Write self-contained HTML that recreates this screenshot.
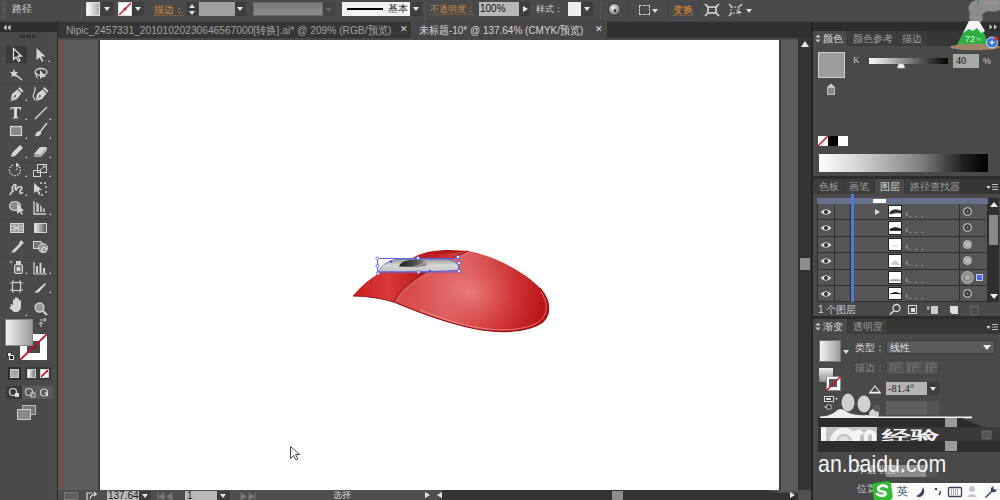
<!DOCTYPE html>
<html><head><meta charset="utf-8">
<style>
*{margin:0;padding:0;box-sizing:border-box}
html,body{width:1000px;height:500px;overflow:hidden;background:#535353;font-family:"Liberation Sans",sans-serif;position:relative}
.a{position:absolute}
.txt{color:#c8c8c8;font-size:11px;white-space:nowrap;line-height:1}
.dd{background:#3e3e3e}
.dd::after{content:"";position:absolute;left:50%;top:50%;margin-left:-3.5px;margin-top:-2px;border-left:3.5px solid transparent;border-right:3.5px solid transparent;border-top:4px solid #e6e6e6}
.tri-dn{position:absolute;width:0;height:0;border-left:3px solid transparent;border-right:3px solid transparent;border-top:4px solid #ddd}
.tri-up{position:absolute;width:0;height:0;border-left:3px solid transparent;border-right:3px solid transparent;border-bottom:4px solid #ddd}
.tri-r{position:absolute;width:0;height:0;border-top:3px solid transparent;border-bottom:3px solid transparent;border-left:5px solid #e6e6e6}
.tri-l{position:absolute;width:0;height:0;border-top:3px solid transparent;border-bottom:3px solid transparent;border-right:5px solid #e6e6e6}
</style></head><body>
<!-- BASE BLOCKS -->
<div class="a" style="left:0;top:22px;width:57px;height:478px;background:#4a4a4a"></div>
<div class="a" style="left:57px;top:22px;width:1px;height:478px;background:#2a2a2a"></div>
<div class="a" style="left:58px;top:22px;width:755px;height:16px;background:#303030"></div>
<div class="a" style="left:58px;top:38px;width:740px;height:452px;background:#5c5c5c"></div>
<div class="a" style="left:58px;top:38px;width:740px;height:2px;background:#4a4a4a"></div>
<div class="a" style="left:58px;top:40px;width:3px;height:450px;background:#625858"></div>
<div class="a" style="left:61px;top:40px;width:3px;height:450px;background:#7a4c4c"></div>
<div class="a" style="left:98px;top:40px;width:2px;height:450px;background:#3c3c3c"></div>
<div class="a" style="left:100px;top:40px;width:679px;height:450px;background:#fff"></div>
<div class="a" style="left:779px;top:40px;width:2px;height:450px;background:#3c3c3c"></div>
<div class="a" style="left:798px;top:38px;width:13px;height:462px;background:#343434"></div>
<div class="a" style="left:811px;top:22px;width:2px;height:478px;background:#262626"></div>
<div class="a" style="left:813px;top:22px;width:187px;height:478px;background:#494949"></div>
<!-- TOP BAR -->
<div class="a" style="left:0;top:0;width:1000px;height:22px;background:#4a4a4a;border-bottom:1px solid #424242"></div>
<div class="a" style="left:2px;top:2px;width:3px;height:17px;border-left:1px dotted #6a6a6a;border-right:1px dotted #6a6a6a"></div>
<div class="a txt" style="left:12px;top:4px;font-size:10px;color:#d6d6d6">路径</div>
<div class="a" style="left:81px;top:2px;height:17px;border-left:1px dotted #666"></div>
<!-- fill swatch -->
<div class="a" style="left:86px;top:2px;width:14px;height:14px;background:linear-gradient(90deg,#fff,#aaa);border:1px solid #ddd"></div>
<div class="a dd" style="left:101px;top:2px;width:13px;height:14px"></div>
<!-- stroke swatch -->
<div class="a" style="left:118px;top:2px;width:14px;height:14px;background:#fff;border:1px solid #ddd;overflow:hidden">
 <svg width="14" height="14" style="position:absolute;left:-1px;top:-1px"><line x1="1" y1="13" x2="13" y2="1" stroke="#d01f2f" stroke-width="1.5"/><circle cx="7" cy="7" r="1.5" fill="#d01f2f"/></svg></div>
<div class="a dd" style="left:132px;top:2px;width:12px;height:14px"></div>
<div class="a txt" style="left:154px;top:5px;color:#d08a3a;font-size:9.5px;border-bottom:1px dotted #a87030;padding-bottom:0">描边：</div>
<div class="a" style="left:186px;top:2px;width:12px;height:14px;background:#3e3e3e"><div class="tri-up" style="left:3px;top:2px"></div><div class="tri-dn" style="left:3px;top:9px"></div></div>
<div class="a" style="left:199px;top:2px;width:36px;height:14px;background:#9f9f9f"></div>
<div class="a dd" style="left:235px;top:2px;width:11px;height:14px"></div>
<div class="a" style="left:253px;top:2px;width:70px;height:14px;background:linear-gradient(#7a7a7a,#8c8c8c);border:1px solid #6a6a6a"></div>
<div class="a" style="left:323px;top:2px;width:12px;height:14px;background:#444"><div class="tri-dn" style="left:3px;top:6px;border-top-color:#666"></div></div>
<!-- brush -->
<div class="a" style="left:342px;top:2px;width:68px;height:14px;background:#f2f2f2"></div>
<div class="a" style="left:347px;top:8px;width:36px;height:2px;background:#000"></div>
<div class="a txt" style="left:388px;top:4px;color:#222;font-size:10px">基本</div>
<div class="a dd" style="left:410px;top:2px;width:12px;height:14px"></div>
<div class="a" style="left:425px;top:2px;height:17px;border-left:1px dotted #666"></div>
<div class="a txt" style="left:430px;top:5px;color:#c08a40;font-size:9px;border-bottom:1px dotted #a06a2a">不透明度：</div>
<div class="a" style="left:479px;top:2px;width:40px;height:14px;background:#b8b8b8"></div>
<div class="a txt" style="left:480px;top:4px;color:#111;font-size:10px">100%</div>
<div class="a" style="left:519px;top:2px;width:11px;height:14px;background:#3e3e3e"><div class="tri-r" style="left:4px;top:4px"></div></div>
<div class="a txt" style="left:536px;top:5px;color:#d0d0d0;font-size:9px">样式：</div>
<div class="a" style="left:568px;top:2px;width:13px;height:14px;background:#eee"></div>
<div class="a dd" style="left:581px;top:2px;width:12px;height:14px"></div>
<div class="a" style="left:600px;top:2px;height:17px;border-left:1px dotted #666"></div>
<div class="a" style="left:608px;top:3px;width:13px;height:13px;border-radius:50%;background:radial-gradient(circle at 40% 35%,#f4f4f4 0,#b8b8b8 3px,#7a7a7a 6.5px);border:1px solid #333"><div class="a" style="left:4.5px;top:5px;width:2.5px;height:3px;border-radius:50%;background:#222"></div></div>
<div class="a" style="left:628px;top:2px;height:17px;border-left:1px solid #444"></div>
<div class="a" style="left:639px;top:5px;width:11px;height:10px;border:1px dashed #ccc"></div>
<div class="a tri-dn" style="left:652px;top:9px"></div>
<div class="a" style="left:667px;top:2px;height:17px;border-left:1px solid #444"></div>
<div class="a" style="left:671px;top:2px;width:27px;height:16px;background:#46484e"></div>
<div class="a txt" style="left:673px;top:5px;color:#e0902a;font-size:10px;border-bottom:1px dotted #a87030">变换</div>
<div class="a" style="left:700px;top:2px;height:17px;border-left:1px solid #444"></div>
<svg class="a" style="left:704px;top:3px" width="16" height="14"><rect x="4" y="4" width="8" height="6" fill="none" stroke="#ddd" stroke-width="1.5"/><path d="M1 1l3 3M15 1l-3 3M1 13l3-3M15 13l-3-3" stroke="#ddd" stroke-width="1.5"/></svg>
<svg class="a" style="left:728px;top:3px" width="16" height="14"><rect x="3" y="4" width="8" height="6" fill="none" stroke="#ccc" stroke-width="1" stroke-dasharray="2 1"/><path d="M1 1l3 3M14 1l-3 3M1 13l3-3" stroke="#ccc" stroke-width="1.5"/><path d="M8 6l6 4-3 0 1 3z" fill="#ddd"/></svg>
<div class="a tri-dn" style="left:746px;top:9px"></div>
<!-- DOC TABS -->
<div class="a" style="left:58px;top:22px;width:353px;height:16px;background:#363636"></div>
<div class="a txt" style="left:66px;top:25px;font-size:11px;color:#a0a0a0;transform:scaleX(0.928);transform-origin:0 0">Nipic_2457331_20101020230646567000[转换].ai* @ 209% (RGB/预览)</div>
<div class="a txt" style="left:400px;top:25px;font-size:9px;color:#ddd">✕</div>
<div class="a" style="left:411px;top:22px;width:196px;height:16px;background:#474747"></div>
<div class="a txt" style="left:419px;top:25px;font-size:11px;color:#d4d4d4;transform:scaleX(0.907);transform-origin:0 0">未标题-10* @ 137.64% (CMYK/预览)</div>
<div class="a txt" style="left:595px;top:25px;font-size:9px;color:#e0e0e0">✕</div>
<!-- TOOLBOX -->
<div class="a" style="left:0;top:22px;width:57px;height:10px;background:#2e2e2e"></div>
<svg class="a" style="left:3px;top:24px" width="8" height="7"><path d="M3.5 0.5L0.5 3.5L3.5 6.5ZM7.5 0.5L4.5 3.5L7.5 6.5Z" fill="#cfcfcf"/></svg>
<div class="a" style="left:20px;top:35px;width:16px;height:3px;background:repeating-linear-gradient(90deg,#2c2c2c 0 2px,#4a4a4a 2px 3px)"></div>
<div class="a" style="left:53px;top:32px;width:3px;height:468px;background:#4e4b4b"></div>
<div class="a" style="left:6px;top:46px;width:21px;height:17px;background:#393939"></div>
<svg class="a" style="left:0;top:40px" width="57" height="290">
<g fill="#d4d4d4" stroke="none">
 <!-- selection outlined arrow -->
 <path d="M13.5 8.5 L13.5 19.5 L16 17 L18.5 21.5 L20 20.5 L17.8 16.2 L21.5 16.2 Z" fill="#2a2a2a" stroke="#e4e4e4" stroke-width="1.2"/>
 <!-- direct selection -->
 <path d="M36.5 8 L36.5 20 L39.5 17.5 L42 22 L43.5 21 L41 16.5 L45.5 16.5 Z"/>
 <path d="M48 22 l2 -2 v2z"/>
 <!-- magic wand -->
 <path d="M14 29 l1.2 3 3 0.3 -2.3 2 0.8 3 -2.7 -1.6 -2.7 1.6 0.8 -3 -2.3 -2 3 -0.3z"/>
 <path d="M16 35 L22 40" stroke="#d4d4d4" stroke-width="1.6"/>
 <!-- lasso -->
 <ellipse cx="41" cy="32" rx="6" ry="3.5" fill="none" stroke="#d4d4d4" stroke-width="1.4"/>
 <path d="M37 33 q-2 4 1 5" fill="none" stroke="#d4d4d4" stroke-width="1.2"/>
 <path d="M40 30 L40 39 L42.5 37 L46 37 Z"/>
</g>
<line x1="4" y1="43.5" x2="50" y2="43.5" stroke="#434343"/>
<g fill="#d4d4d4">
 <!-- pen -->
 <path d="M10.5 61.5 L12 54 L17.5 49.5 L21.5 53.5 L17 59 Z"/><path d="M18 48.5 l1.5 -1.5 4 4 -1.5 1.5z"/><circle cx="15" cy="56" r="1" fill="#4a4a4a"/><path d="M10.5 61.5 L15 56" stroke="#4a4a4a" stroke-width="0.6"/>
 <path d="M25 61 l2 -2 v2z"/>
 <path d="M35.5 61.5 L37 54 L42.5 49.5 L46.5 53.5 L42 59 Z"/><path d="M43 48.5 l1.5 -1.5 4 4 -1.5 1.5z"/><circle cx="40" cy="56" r="1" fill="#4a4a4a"/><path d="M35.5 61.5 L40 56" stroke="#4a4a4a" stroke-width="0.6"/>
 <path d="M35 60 q-3 -4 -1 -7 q2 -3 1 -6" fill="none" stroke="#d4d4d4" stroke-width="1.2"/>
 <!-- type -->
 <path d="M11 67 h10 v3 h-0.8 l-0.8 -1.6 h-2.4 v8.6 l1.3 0.8 v0.7 h-5.6 v-0.7 l1.3 -0.8 v-8.6 h-2.4 l-0.8 1.6 h-0.8z"/>
 <path d="M25 80 l2 -2 v2z"/>
 <!-- line -->
 <path d="M35 79 L47 67" stroke="#d4d4d4" stroke-width="1.5"/>
 <path d="M49 80 l2 -2 v2z"/>
 <!-- rect -->
 <rect x="10.5" y="86.5" width="11" height="9" fill="#8a8a8a" stroke="#d4d4d4" stroke-width="1.2"/>
 <path d="M25 99 l2 -2 v2z"/>
 <!-- brush -->
 <path d="M47 83 L40 92" stroke="#d4d4d4" stroke-width="1.4"/>
 <path d="M35 96 q1 -5 5 -5 q2 1 1 3 q-2 3 -6 2z"/>
 <path d="M49 99 l2 -2 v2z"/>
 <!-- pencil -->
 <path d="M11 117 l1 -4 8 -8 3 3 -8 8z"/>
 <path d="M25 118 l2 -2 v2z"/>
 <!-- eraser -->
 <path d="M34 114 l6 -7 h7 l-6 7z" /><path d="M34 114 v3 h7 v-3z" fill="#a0a0a0"/><path d="M41 117 l6 -7 v-3 l-6 7z" fill="#bcbcbc"/>
 <path d="M49 118 l2 -2 v2z"/>
</g>
<line x1="4" y1="122.5" x2="50" y2="122.5" stroke="#434343"/>
<g fill="#d4d4d4">
 <!-- rotate -->
 <path d="M13 125 a5.5 5.5 0 1 0 6 1.5" fill="none" stroke="#d4d4d4" stroke-width="1.3" stroke-dasharray="1.6 1.2"/>
 <path d="M16 122.5 l3.5 2.5 -3.5 2.5z"/><path d="M16 130.5 l2 -3" stroke="#d4d4d4"/>
 <path d="M25 137 l2 -2 v2z"/>
 <!-- scale -->
 <rect x="33.5" y="130.5" width="7" height="6" fill="none" stroke="#d4d4d4" stroke-width="1"/>
 <rect x="37.5" y="124.5" width="9" height="8" fill="none" stroke="#d4d4d4" stroke-width="1"/>
 <path d="M40 130 l5 -4 M43 126 h2 v2" stroke="#d4d4d4" fill="none"/>
 <path d="M49 137 l2 -2 v2z"/>
 <!-- puppet warp -->
 <path d="M10 155 q1 -3 3 -4 q-2 -3 1 -6 q2 -1 2 1 q-2 2 0 4 q2 -4 5 -3 q2 1 0 3 q-2 1 -1 3 q2 1 3 -1" fill="none" stroke="#d4d4d4" stroke-width="1.6"/>
 <path d="M25 156 l2 -2 v2z"/>
 <!-- free transform -->
 <path d="M34 143 L34 153 L37 151 L39 155 L40.5 154 L38.5 150 L42 150 Z"/>
 <path d="M40 143 h2 M44 143 h2 M46 146 v2 M46 151 v2 M41 155 h2" stroke="#d4d4d4" stroke-width="1.3"/>
 <!-- shape builder -->
 <ellipse cx="15" cy="166" rx="5.5" ry="4.5" fill="#8a8a8a" stroke="#d4d4d4" stroke-width="1.2"/>
 <path d="M17 163 L17 174 L19.5 172 L22 175 L23 174 L21 171 L24 171 Z"/>
 <!-- perspective -->
 <path d="M34 161 v13 h12" fill="none" stroke="#d4d4d4" stroke-width="1.3"/>
 <path d="M36 162 v10 h3 v-8z M40 165 v7 h2 v-5z M43 168 v4 h2 v-3z" fill="#b4b4b4"/>
 <path d="M49 175 l2 -2 v2z"/>
</g>
<line x1="4" y1="179.5" x2="50" y2="179.5" stroke="#434343"/>
<g fill="#d4d4d4">
 <!-- mesh -->
 <rect x="10.5" y="183.5" width="13" height="9" fill="#9a9a9a" stroke="#d4d4d4"/>
 <path d="M11 186 q6 3 12 0 M11 190 q6 -3 12 0 M14 184 q3 4 0 8 M19 184 q-3 4 0 8" fill="none" stroke="#e0e0e0" stroke-width="0.8"/>
 <!-- gradient -->
 <defs><linearGradient id="tg" x1="0" x2="1"><stop offset="0" stop-color="#eee"/><stop offset="1" stop-color="#555"/></linearGradient></defs>
 <rect x="34.5" y="183.5" width="12" height="9" fill="url(#tg)" stroke="#d4d4d4"/>
 <!-- eyedropper -->
 <path d="M12 211 l8 -8 2 2 -8 8z"/><path d="M19 203 l2 -3 3 3 -3 2z"/><path d="M11 213 l1 -2 1 1z"/>
 <!-- blend -->
 <rect x="33.5" y="201.5" width="8" height="7" fill="#777" stroke="#d4d4d4"/>
 <circle cx="43" cy="208" r="4.5" fill="#999" stroke="#d4d4d4"/>
 <circle cx="44" cy="210" r="2.5" fill="none" stroke="#e0e0e0"/>
</g>
<line x1="4" y1="217.5" x2="50" y2="217.5" stroke="#434343"/>
<g fill="#d4d4d4">
 <!-- symbol sprayer -->
 <rect x="14.5" y="224.5" width="8" height="9" rx="1.5" fill="#777" stroke="#d4d4d4"/>
 <rect x="16" y="221" width="5" height="3"/>
 <circle cx="18.5" cy="229" r="2" fill="#ddd"/>
 <circle cx="11" cy="222" r="1.3" fill="#999"/>
 <path d="M25 234 l2 -2 v2z"/>
 <!-- column graph -->
 <path d="M34 222 v12 h13" fill="none" stroke="#d4d4d4" stroke-width="1.2"/>
 <path d="M36 226h2v7h-2z M39.5 223h2v10h-2z M43 228h2v5h-2z"/>
 <path d="M49 234 l2 -2 v2z"/>
 <!-- artboard -->
 <rect x="12.5" y="242.5" width="8" height="8" fill="none" stroke="#d4d4d4" stroke-width="1.2"/>
 <path d="M10 243h2M10 250h2M21 243h2M21 250h2M13 240v2M20 240v2M13 251v2M20 251v2" stroke="#d4d4d4"/>
 <!-- slice -->
 <path d="M35 252 l10 -9 1 1 -7 8 -3 1z"/>
 <path d="M49 253 l2 -2 v2z"/>
 <g transform="translate(0,5)"><!-- hand -->
 <path d="M11 262 q-1 -4 1 -3 l1 2 v-6 q1 -2 2 0 v4 v-6 q1 -2 2 0 v6 v-5 q1 -2 2 0 v5 v-3 q1 -2 2 0 v5 q0 5 -4 6 h-3 q-2 -1 -5 -5z"/>
 <path d="M25 271 l2 -2 v2z"/>
 <!-- zoom -->
 <circle cx="39.5" cy="262.5" r="4.5" fill="#999" stroke="#d4d4d4" stroke-width="1.3"/>
 <path d="M43 266 l4 4" stroke="#d4d4d4" stroke-width="2.2"/></g>
</g>
</svg>
<!-- fill/stroke -->
<div class="a" style="left:20px;top:334px;width:27px;height:26px;background:#fff"></div>
<div class="a" style="left:27px;top:341px;width:13px;height:12px;background:#4a4a4a"></div>
<svg class="a" style="left:20px;top:334px" width="27" height="26"><line x1="0" y1="26" x2="27" y2="0" stroke="#c8102e" stroke-width="1.8"/><rect x="11" y="11" width="5" height="4" fill="#8a2525"/></svg>
<div class="a" style="left:5px;top:319px;width:28px;height:27px;background:linear-gradient(90deg,#f4f4f4,#9a9a9a);border:1px solid #888"></div>
<svg class="a" style="left:38px;top:318px" width="12" height="11"><path d="M2 2 h6 l-2 -2 M8 2 l-2 2 M3 9 v-5 l-2 2 M3 4 l2 2" fill="none" stroke="#ccc" stroke-width="1"/></svg>
<div class="a" style="left:7px;top:352px;width:5px;height:5px;background:#eee;border:1px solid #333"></div>
<div class="a" style="left:9px;top:355px;width:5px;height:5px;background:#222;border:1px solid #ddd"></div>
<!-- color mode buttons -->
<div class="a" style="left:8px;top:367px;width:13px;height:13px;background:#2e2e2e"><div class="a" style="left:2px;top:2px;width:9px;height:9px;background:#a8a8a8;border:1px solid #ccc"></div></div>
<div class="a" style="left:25px;top:367px;width:13px;height:13px;background:#3a3a3a"><div class="a" style="left:2px;top:2px;width:9px;height:9px;background:linear-gradient(90deg,#fff,#777);border:1px solid #ccc"></div></div>
<div class="a" style="left:38px;top:367px;width:13px;height:13px;background:#3a3a3a"><div class="a" style="left:2px;top:2px;width:9px;height:9px;background:#fff;border:1px solid #ccc;overflow:hidden"><svg width="9" height="9" style="position:absolute;left:-1px;top:-1px"><line x1="0" y1="9" x2="9" y2="0" stroke="#d0102e" stroke-width="1.8"/></svg></div></div>
<!-- draw modes -->
<div class="a" style="left:6px;top:386px;width:47px;height:13px;background:#5a5a5a"></div>
<div class="a" style="left:6px;top:386px;width:16px;height:13px;background:#3a3a3a"></div>
<svg class="a" style="left:6px;top:386px" width="47" height="13">
 <circle cx="7" cy="6" r="3.5" fill="none" stroke="#ddd" stroke-width="1.2"/><rect x="9" y="7" width="4" height="4" fill="#ddd"/>
 <circle cx="23" cy="6" r="3.5" fill="none" stroke="#ccc" stroke-width="1.2"/><rect x="25" y="7" width="4" height="4" fill="none" stroke="#ccc"/>
 <circle cx="38" cy="6.5" r="3.5" fill="none" stroke="#ccc" stroke-width="1.2"/><path d="M38 6.5 h4 v4z" fill="#ddd"/>
</svg>
<!-- screen mode -->
<svg class="a" style="left:17px;top:405px" width="20" height="16"><rect x="5.5" y="0.5" width="13" height="9" fill="#777" stroke="#bbb"/><rect x="0.5" y="4.5" width="13" height="10" fill="#8a8a8a" stroke="#ccc"/></svg>
<!-- ARTWORK -->
<svg class="a" style="left:0;top:0" width="1000" height="500" viewBox="0 0 1000 500">
<defs>
 <linearGradient id="wingG" x1="353" y1="0" x2="470" y2="0" gradientUnits="userSpaceOnUse">
  <stop offset="0" stop-color="#c81e1e"/><stop offset="0.3" stop-color="#d83a38"/><stop offset="0.6" stop-color="#b81a1a"/><stop offset="1" stop-color="#d84848"/>
 </linearGradient>
 <linearGradient id="shellG" x1="400" y1="270" x2="550" y2="320" gradientUnits="userSpaceOnUse">
  <stop offset="0" stop-color="#d64a4a"/><stop offset="0.35" stop-color="#e06464"/><stop offset="0.7" stop-color="#cc2c2c"/><stop offset="1" stop-color="#b41010"/>
 </linearGradient>
 <radialGradient id="shellR" cx="470" cy="292" r="85" gradientUnits="userSpaceOnUse" gradientTransform="translate(470 292) rotate(25) scale(1 0.8) translate(-470 -292)">
  <stop offset="0" stop-color="#ec8282" stop-opacity="0.85"/><stop offset="0.45" stop-color="#e06060" stop-opacity="0.35"/><stop offset="1" stop-color="#b81414" stop-opacity="0"/>
 </radialGradient>
 <linearGradient id="humpG" x1="0" y1="250" x2="0" y2="262" gradientUnits="userSpaceOnUse">
  <stop offset="0" stop-color="#a81212"/><stop offset="1" stop-color="#d03a3a"/>
 </linearGradient>
 <linearGradient id="lensG" x1="0" y1="258" x2="0" y2="274" gradientUnits="userSpaceOnUse">
  <stop offset="0" stop-color="#8c8c8c"/><stop offset="0.45" stop-color="#d8d8d8"/><stop offset="0.8" stop-color="#c4c4c4"/><stop offset="1" stop-color="#9a9aa8"/>
 </linearGradient>
 <linearGradient id="wheelG" x1="400" y1="0" x2="428" y2="0" gradientUnits="userSpaceOnUse">
  <stop offset="0" stop-color="#222"/><stop offset="0.6" stop-color="#555"/><stop offset="1" stop-color="#aaa"/>
 </linearGradient>
</defs>
<!-- hump (back) -->
<path d="M408 262 C 415 254, 430 250, 450 250 L 470 251 L 462 262 Z" fill="url(#humpG)"/>
<!-- wing -->
<path d="M353 296 C 362 284, 378 272, 400 262 C 412 257, 440 255, 468 251 C 440 266, 405 282, 394 302 C 380 298, 365 296, 353 296 Z" fill="url(#wingG)"/>
<path d="M353 296 C 365 296, 380 298, 394 302" fill="none" stroke="#8a0c0c" stroke-width="1.2"/>
<!-- shell -->
<path d="M468 251 C 492 255, 524 271, 540 288 C 552 302, 552 318, 538 325 C 524 332, 502 333, 482 330 C 452 325, 420 313, 394 302 C 400 285, 430 268, 468 251 Z" fill="url(#shellG)"/>
<path d="M468 251 C 492 255, 524 271, 540 288 C 552 302, 552 318, 538 325 C 524 332, 502 333, 482 330 C 452 325, 420 313, 394 302 C 400 285, 430 268, 468 251 Z" fill="url(#shellR)"/>
<path d="M394 302 C 420 313, 452 325, 482 330 C 502 333, 524 332, 538 325 C 552 318, 552 302, 540 288" fill="none" stroke="#9a1010" stroke-width="1.1"/>
<path d="M420 310 C 446 320, 464 326, 484 328.5 C 503 331, 523 330, 536 323.5 C 548 317, 549 304, 541 292" fill="none" stroke="#f6b4b4" stroke-width="1" opacity="0.55"/>
<path d="M468 251 C 430 268, 400 285, 394 302" fill="none" stroke="#8a1414" stroke-width="1"/>
<path d="M469 253 C 433 270, 403 287, 397 301" fill="none" stroke="#f08a8a" stroke-width="0.8" opacity="0.5"/>
<!-- scroll lens -->
<path d="M378 272 C 382 265, 388 260, 400 259 L 446 259 C 455 260, 460 265, 459 270 C 440 272, 400 272, 378 272 Z" fill="url(#lensG)"/>
<path d="M399 266.5 C 401 261, 408 259.5, 418 259.5 C 426 259.5, 429 263, 426 266 C 416 267, 406 267, 399 266.5 Z" fill="url(#wheelG)"/>
<path d="M414 266 C 420 265, 425 264, 426 261" fill="none" stroke="#ccc" stroke-width="0.6"/>
<!-- selection -->
<g fill="none" stroke="#5a64d8" stroke-width="1">
 <rect x="377.5" y="258.5" width="81" height="13.5"/>
 <path d="M378 272 C 382 265, 388 260, 400 259 L 446 259 C 455 260, 460 265, 459 270 C 440 272, 400 272, 378 272" stroke-width="0.9"/>
</g>
<g fill="#fff" stroke="#5a64d8" stroke-width="0.9">
 <circle cx="377.5" cy="258.5" r="1.6"/><circle cx="377.5" cy="266" r="1.6"/><circle cx="378" cy="273.5" r="1.6"/>
 <circle cx="418" cy="258" r="1.6"/><circle cx="418.5" cy="272" r="1.6"/>
 <circle cx="458" cy="257" r="1.6"/><circle cx="459" cy="263" r="1.6"/><circle cx="459" cy="271" r="1.6"/>
</g>
<circle cx="391" cy="261.5" r="1.3" fill="#4a54d0"/><circle cx="430" cy="271" r="1.2" fill="#4a54d0"/>
<!-- cursor -->
<path d="M290.5 446.5 L290.5 458.5 L293.5 455.5 L296 460 L298 459 L295.5 454.5 L299.5 454.5 Z" fill="#fff" stroke="#333" stroke-width="0.9"/>
</svg>
<!-- STATUS BAR -->
<div class="a" style="left:58px;top:490px;width:384px;height:10px;background:#4e4e4e"></div>
<div class="a" style="left:442px;top:490px;width:320px;height:10px;background:#333"></div>
<svg class="a" style="left:760px;top:490px" width="38" height="10"><path d="M0 0 L6 0 L20 3 L38 3 L38 10 L0 10Z" fill="#333"/></svg>
<div class="a" style="left:798px;top:490px;width:13px;height:10px;background:#505050"></div>
<div class="a" style="left:612px;top:491px;width:11px;height:9px;background:#8c8c8c"></div>
<div class="a" style="left:64px;top:492px;width:14px;height:8px;background:#5e5e5e;border:1px solid #777"></div>
<svg class="a" style="left:86px;top:491px" width="12" height="9"><path d="M1 9 v-7 h5 M4 8 q1 -5 6 -5 l-2 -2 M10 3 l-2 2" fill="none" stroke="#ddd" stroke-width="1.2"/></svg>
<div class="a" style="left:107px;top:491px;width:32px;height:9px;background:#b8b8b8"></div>
<div class="a txt" style="left:108px;top:491px;font-size:10px;color:#222">137.64</div>
<div class="a dd" style="left:139px;top:491px;width:12px;height:9px"></div>
<svg class="a" style="left:156px;top:492px" width="22" height="8"><path d="M2 1v7M8 1 l-5 3.5 5 3.5z M16 1 l-5 3.5 5 3.5z" stroke="#777" fill="#777"/></svg>
<div class="a" style="left:185px;top:491px;width:32px;height:9px;background:#b8b8b8"></div>
<div class="a txt" style="left:187px;top:491px;font-size:10px;color:#222">1</div>
<div class="a dd" style="left:217px;top:491px;width:13px;height:9px"></div>
<svg class="a" style="left:236px;top:492px" width="22" height="8"><path d="M5 1 l5 3.5 -5 3.5z M13 1 l5 3.5 -5 3.5z M19 1v7" stroke="#777" fill="#777"/></svg>
<div class="a txt" style="left:333px;top:491px;font-size:9px;color:#ccc">选择</div>
<div class="a tri-r" style="left:425px;top:492px"></div>
<div class="a tri-l" style="left:437px;top:492px"></div>
<div class="a tri-r" style="left:790px;top:492px"></div>
<!-- RIGHT PANELS -->
<div class="a" style="left:813px;top:22px;width:187px;height:9px;background:#2d2d2d"></div>
<svg class="a" style="left:989px;top:24px" width="9" height="6"><path d="M0.5 0.5 L3.5 3 L0.5 5.5Z M5 0.5 L8 3 L5 5.5Z" fill="#d0d0d0"/></svg>
<!-- color panel tabs -->
<div class="a" style="left:813px;top:31px;width:187px;height:15px;background:#363636"></div>
<div class="a" style="left:813px;top:31px;width:34px;height:15px;background:#4a4a4a"></div>
<div class="a" style="left:848px;top:31px;width:48px;height:15px;background:#3d3d3d"></div>
<div class="a" style="left:897px;top:31px;width:30px;height:15px;background:#3d3d3d"></div>
<svg class="a" style="left:815px;top:34px" width="6" height="9"><path d="M0.5 3.5 L3 0.5 L5.5 3.5Z M0.5 5.5 L3 8.5 L5.5 5.5Z" fill="#ccc"/></svg>
<div class="a txt" style="left:823px;top:34px;font-size:10px;color:#dadada">颜色</div>
<div class="a txt" style="left:853px;top:34px;font-size:9.5px;color:#9c9c9c">颜色参考</div>
<div class="a txt" style="left:902px;top:34px;font-size:9.5px;color:#9c9c9c">描边</div>
<!-- color body -->
<div class="a" style="left:818px;top:52px;width:27px;height:26px;background:#9c9c9c;border:1px solid #cfcfcf"></div>
<svg class="a" style="left:826px;top:83px" width="10" height="12"><path d="M5 0.5 L9 4 H1Z" fill="#ccc"/><rect x="1.5" y="4.5" width="7" height="7" fill="#888" stroke="#bbb"/></svg>
<div class="a txt" style="left:853px;top:56px;font-size:9px;color:#ccc;font-family:'Liberation Serif',serif">K</div>
<div class="a" style="left:869px;top:58px;width:79px;height:6px;background:linear-gradient(90deg,#fff,#000)"></div>
<svg class="a" style="left:896px;top:62px" width="10" height="7"><path d="M1 6.5 Q1 1 5 1 Q9 1 9 6.5Z" fill="#eee" stroke="#555" stroke-width="0.6"/></svg>
<div class="a" style="left:953px;top:54px;width:26px;height:14px;background:#a8a8a8"></div>
<div class="a txt" style="left:956px;top:56px;font-size:10px;color:#111;font-family:'Liberation Serif',serif">40</div>
<div class="a txt" style="left:983px;top:57px;font-size:9px;color:#ccc">%</div>
<!-- none/black/white -->
<div class="a" style="left:818px;top:136px;width:10px;height:10px;background:#fff;overflow:hidden"><svg width="10" height="10" style="position:absolute;left:0;top:0"><line x1="0" y1="10" x2="10" y2="0" stroke="#c8102e" stroke-width="1.5"/></svg></div>
<div class="a" style="left:828px;top:136px;width:10px;height:10px;background:#000"></div>
<div class="a" style="left:838px;top:136px;width:10px;height:10px;background:#fff"></div>
<div class="a" style="left:819px;top:154px;width:169px;height:18px;background:linear-gradient(90deg,#fff 0%,#d0d0d0 25%,#808080 60%,#202020 85%,#000 100%)"></div>
<!-- separator -->
<div class="a" style="left:813px;top:176px;width:187px;height:3px;background:#2d2d2d"></div>
<!-- layers tabs -->
<div class="a" style="left:813px;top:179px;width:187px;height:15px;background:#363636"></div>
<div class="a" style="left:813px;top:179px;width:31px;height:15px;background:#3d3d3d"></div>
<div class="a" style="left:845px;top:179px;width:29px;height:15px;background:#3d3d3d"></div>
<div class="a" style="left:875px;top:179px;width:29px;height:15px;background:#4a4a4a"></div>
<div class="a" style="left:905px;top:179px;width:55px;height:15px;background:#3d3d3d"></div>
<div class="a txt" style="left:819px;top:182px;font-size:9.5px;color:#9c9c9c">色板</div>
<div class="a txt" style="left:849px;top:182px;font-size:9.5px;color:#9c9c9c">画笔</div>
<div class="a txt" style="left:880px;top:182px;font-size:10px;color:#dadada">图层</div>
<div class="a txt" style="left:910px;top:182px;font-size:9.5px;color:#9c9c9c">路径查找器</div>
<svg class="a" style="left:986px;top:183px" width="12" height="8"><path d="M0.5 3 h4 l-2 3z" fill="#ddd"/><path d="M6 1.5h6M6 4h6M6 6.5h6" stroke="#bbb"/></svg>
<!-- layers list -->
<div class="a" style="left:817px;top:198px;width:171px;height:104px;background:#2f2f2f"></div>
<div class="a" style="left:817px;top:198px;width:171px;height:6px;background:#66708a"></div>
<div class="a" style="left:818px;top:204px;width:16px;height:15px;background:#555"></div>
<div class="a" style="left:835px;top:204px;width:15px;height:15px;background:#555"></div>
<div class="a" style="left:851px;top:204px;width:108px;height:15px;background:#555"></div>
<div class="a" style="left:960px;top:204px;width:27px;height:15px;background:#555"></div>
<svg class="a" style="left:820px;top:208px" width="12" height="8"><path d="M0.5 4 Q6 -1.5 11.5 4 Q6 9.5 0.5 4Z" fill="#ddd"/><circle cx="6" cy="4" r="2" fill="#333"/></svg>
<div class="a" style="left:888px;top:205px;width:14px;height:13px;background:#fff;border:1px solid #222"></div>
<div class="a txt" style="left:905px;top:208px;font-size:11px;color:#a8a8a8">‹. . .</div>
<div class="a" style="left:963px;top:207px;width:9px;height:9px;border-radius:50%;border:1.5px solid #c8c8c8;background:radial-gradient(circle,#777 0 1px,#2e2e2e 1.5px 2.5px,#666 3px)"></div>
<div class="a" style="left:818px;top:220px;width:16px;height:16px;background:#555"></div>
<div class="a" style="left:835px;top:220px;width:15px;height:16px;background:#555"></div>
<div class="a" style="left:851px;top:220px;width:108px;height:16px;background:#555"></div>
<div class="a" style="left:960px;top:220px;width:27px;height:16px;background:#555"></div>
<svg class="a" style="left:820px;top:224px" width="12" height="8"><path d="M0.5 4 Q6 -1.5 11.5 4 Q6 9.5 0.5 4Z" fill="#ddd"/><circle cx="6" cy="4" r="2" fill="#333"/></svg>
<div class="a" style="left:888px;top:221px;width:14px;height:14px;background:#fff;border:1px solid #222"></div>
<div class="a txt" style="left:905px;top:224px;font-size:11px;color:#a8a8a8">‹. . .</div>
<div class="a" style="left:963px;top:223px;width:9px;height:9px;border-radius:50%;border:1.5px solid #c8c8c8;background:radial-gradient(circle,#777 0 1px,#2e2e2e 1.5px 2.5px,#666 3px)"></div>
<div class="a" style="left:818px;top:237px;width:16px;height:15px;background:#555"></div>
<div class="a" style="left:835px;top:237px;width:15px;height:15px;background:#555"></div>
<div class="a" style="left:851px;top:237px;width:108px;height:15px;background:#555"></div>
<div class="a" style="left:960px;top:237px;width:27px;height:15px;background:#555"></div>
<svg class="a" style="left:820px;top:241px" width="12" height="8"><path d="M0.5 4 Q6 -1.5 11.5 4 Q6 9.5 0.5 4Z" fill="#ddd"/><circle cx="6" cy="4" r="2" fill="#333"/></svg>
<div class="a" style="left:888px;top:238px;width:14px;height:13px;background:#fff;border:1px solid #222"></div>
<div class="a txt" style="left:905px;top:241px;font-size:11px;color:#a8a8a8">‹. . .</div>
<div class="a" style="left:963px;top:240px;width:9px;height:9px;border-radius:50%;border:1.5px solid #c8c8c8;background:radial-gradient(circle,#bbb 0 2px,#999 3px)"></div>
<div class="a" style="left:818px;top:253px;width:16px;height:16px;background:#555"></div>
<div class="a" style="left:835px;top:253px;width:15px;height:16px;background:#555"></div>
<div class="a" style="left:851px;top:253px;width:108px;height:16px;background:#555"></div>
<div class="a" style="left:960px;top:253px;width:27px;height:16px;background:#555"></div>
<svg class="a" style="left:820px;top:257px" width="12" height="8"><path d="M0.5 4 Q6 -1.5 11.5 4 Q6 9.5 0.5 4Z" fill="#ddd"/><circle cx="6" cy="4" r="2" fill="#333"/></svg>
<div class="a" style="left:888px;top:254px;width:14px;height:14px;background:#fff;border:1px solid #222"></div>
<div class="a txt" style="left:905px;top:257px;font-size:11px;color:#a8a8a8">‹. . .</div>
<div class="a" style="left:963px;top:256px;width:9px;height:9px;border-radius:50%;border:1.5px solid #c8c8c8;background:radial-gradient(circle,#bbb 0 2px,#999 3px)"></div>
<div class="a" style="left:818px;top:270px;width:16px;height:15px;background:#555"></div>
<div class="a" style="left:835px;top:270px;width:15px;height:15px;background:#555"></div>
<div class="a" style="left:851px;top:270px;width:108px;height:15px;background:#555"></div>
<div class="a" style="left:960px;top:270px;width:27px;height:15px;background:#555"></div>
<svg class="a" style="left:820px;top:274px" width="12" height="8"><path d="M0.5 4 Q6 -1.5 11.5 4 Q6 9.5 0.5 4Z" fill="#ddd"/><circle cx="6" cy="4" r="2" fill="#333"/></svg>
<div class="a" style="left:888px;top:271px;width:14px;height:13px;background:#fff;border:1px solid #222"></div>
<div class="a txt" style="left:905px;top:274px;font-size:11px;color:#a8a8a8">‹. . .</div>
<div class="a" style="left:961px;top:271px;width:13px;height:13px;border-radius:50%;border:1.5px solid #b0b0b0;background:radial-gradient(circle,#aaa 0 2px,#888 3px,#999 5px)"></div>
<div class="a" style="left:818px;top:286px;width:16px;height:15px;background:#555"></div>
<div class="a" style="left:835px;top:286px;width:15px;height:15px;background:#555"></div>
<div class="a" style="left:851px;top:286px;width:108px;height:15px;background:#555"></div>
<div class="a" style="left:960px;top:286px;width:27px;height:15px;background:#555"></div>
<svg class="a" style="left:820px;top:290px" width="12" height="8"><path d="M0.5 4 Q6 -1.5 11.5 4 Q6 9.5 0.5 4Z" fill="#ddd"/><circle cx="6" cy="4" r="2" fill="#333"/></svg>
<div class="a" style="left:888px;top:287px;width:14px;height:13px;background:#fff;border:1px solid #222"></div>
<div class="a txt" style="left:905px;top:290px;font-size:11px;color:#a8a8a8">‹. . .</div>
<div class="a" style="left:963px;top:289px;width:9px;height:9px;border-radius:50%;border:1.5px solid #c8c8c8;background:radial-gradient(circle,#777 0 1px,#2e2e2e 1.5px 2.5px,#666 3px)"></div>
<div class="a" style="left:851px;top:194px;width:3px;height:108px;background:#4f7ad8"></div>
<div class="a tri-r" style="left:875px;top:209px;border-left-color:#ddd"></div>
<div class="a" style="left:873px;top:199px;width:13px;height:4px;background:#fff"></div>
<div class="a" style="left:976px;top:274px;width:7px;height:7px;background:#4a6ae0;border:1px solid #ccd"></div>
<svg class="a" style="left:889px;top:206px" width="12" height="12"><path d="M1 6 q4 -4 11 -1 v2 q-5 -1 -11 1z" fill="#333" stroke="#333" stroke-width="0.8"/></svg>
<svg class="a" style="left:889px;top:222px" width="12" height="12"><path d="M1 7 q5 -3 11 0 v1.5 h-11z" fill="#222" stroke="#222" stroke-width="0.8"/></svg>
<svg class="a" style="left:889px;top:239px" width="12" height="12"><path d="M3 7 h6" fill="#bbb" stroke="#bbb" stroke-width="0.8"/></svg>
<svg class="a" style="left:889px;top:255px" width="12" height="12"><path d="M2 9 l4 -4 5 5z" fill="#ccc" stroke="#ccc" stroke-width="0.8"/></svg>
<svg class="a" style="left:889px;top:272px" width="12" height="12"><path d="M1 8 q5 -1 11 0 v1 h-11z" fill="#aaa" stroke="#aaa" stroke-width="0.8"/></svg>
<svg class="a" style="left:889px;top:288px" width="12" height="12"><path d="M1 6 q5 -3 11 0" fill="#111" stroke="#111" stroke-width="0.8"/></svg>
<div class="a" style="left:988px;top:198px;width:11px;height:104px;background:#2f2f2f"></div>
<div class="a tri-up" style="left:990px;top:202px;border-left-width:4px;border-right-width:4px;border-bottom:5px solid #eee"></div>
<div class="a" style="left:989px;top:215px;width:9px;height:30px;background:#8a8a8a"></div>
<div class="a tri-dn" style="left:990px;top:294px;border-left-width:4px;border-right-width:4px;border-top:5px solid #eee"></div>
<!-- layers footer -->
<div class="a txt" style="left:818px;top:305px;font-size:10px;color:#d0d0d0">1 个图层</div>
<svg class="a" style="left:887px;top:303px" width="100" height="13">
 <circle cx="9.5" cy="5" r="3.5" fill="none" stroke="#ddd" stroke-width="1.3"/><path d="M7 7.5 l-4 4" stroke="#ddd" stroke-width="1.6"/>
 <rect x="21.5" y="2.5" width="8" height="8" fill="none" stroke="#ddd"/><rect x="24" y="5" width="4" height="4" fill="#ddd"/>
 <path d="M40 5 h3 M41 3 v4" stroke="#ccc"/><rect x="44" y="3" width="7" height="8" fill="#ccc"/>
 <path d="M63 3 h8 v8 h-6 l-2 -2z" fill="#ddd"/>
 <path d="M84 4 h7 v8 h-7z M83 3 h9" fill="none" stroke="#666"/>
</svg>
<div class="a" style="left:813px;top:316px;width:187px;height:3px;background:#2d2d2d"></div>
<!-- gradient tabs -->
<div class="a" style="left:813px;top:319px;width:187px;height:15px;background:#363636"></div>
<div class="a" style="left:813px;top:319px;width:34px;height:15px;background:#4a4a4a"></div>
<div class="a" style="left:848px;top:319px;width:39px;height:15px;background:#3d3d3d"></div>
<svg class="a" style="left:815px;top:322px" width="6" height="9"><path d="M0.5 3.5 L3 0.5 L5.5 3.5Z M0.5 5.5 L3 8.5 L5.5 5.5Z" fill="#ccc"/></svg>
<div class="a txt" style="left:823px;top:322px;font-size:10px;color:#dadada">渐变</div>
<div class="a txt" style="left:853px;top:322px;font-size:9.5px;color:#9c9c9c">透明度</div>
<svg class="a" style="left:986px;top:323px" width="12" height="8"><path d="M0.5 3 h4 l-2 3z" fill="#ddd"/><path d="M6 1.5h6M6 4h6M6 6.5h6" stroke="#bbb"/></svg>
<!-- gradient body -->
<div class="a" style="left:819px;top:340px;width:22px;height:22px;background:linear-gradient(90deg,#f4f4f4,#9a9a9a);border:1px solid #777"></div>
<div class="a tri-dn" style="left:843px;top:350px;border-top-color:#ddd"></div>
<div class="a txt" style="left:855px;top:343px;font-size:10px;color:#d4d4d4">类型：</div>
<div class="a" style="left:886px;top:340px;width:109px;height:14px;background:#5a5a5a;border:1px solid #3c3c3c"></div>
<div class="a txt" style="left:890px;top:343px;font-size:10px;color:#e0e0e0">线性</div>
<div class="a" style="left:983px;top:345px;width:0;height:0;border-left:4px solid transparent;border-right:4px solid transparent;border-top:5px solid #eee"></div>
<div class="a txt" style="left:855px;top:363px;font-size:10px;color:#888">描边：</div>
<div class="a" style="left:886px;top:360px;width:53px;height:15px;background:#555;border:1px solid #444"></div>
<svg class="a" style="left:887px;top:361px" width="52" height="13"><path d="M4 11v-8h10M8 11v-5h6 M22 11v-8h10M26 11v-5h6 M40 11v-8h10M44 11v-5h6" fill="none" stroke="#777" stroke-width="1.2"/><path d="M17.5 0v13M35.5 0v13" stroke="#444"/></svg>
<div class="a" style="left:819px;top:368px;width:14px;height:14px;background:linear-gradient(180deg,#f0f0f0,#9a9a9a);border:1px solid #888"></div>
<div class="a" style="left:826px;top:376px;width:15px;height:15px;background:#fff;border:1px solid #888"></div>
<div class="a" style="left:829px;top:379px;width:8px;height:8px;background:#555"></div>
<svg class="a" style="left:826px;top:376px" width="15" height="15"><line x1="0" y1="15" x2="15" y2="0" stroke="#c8102e" stroke-width="1.5"/></svg>
<div class="a" style="left:819px;top:368px;width:14px;height:9px;background:linear-gradient(180deg,#f0f0f0,#aaa)"></div>
<svg class="a" style="left:869px;top:385px" width="12" height="9"><path d="M0.5 8 h11 L6 1z" fill="none" stroke="#ddd" stroke-width="1.1"/><path d="M1 7.5 h10" stroke="#eee" stroke-width="1.5"/></svg>
<div class="a" style="left:886px;top:382px;width:41px;height:13px;background:#b4b4b4"></div>
<div class="a txt" style="left:888px;top:384px;font-size:10.5px;color:#222;font-family:'Liberation Serif',serif">-81.4°</div>
<div class="a dd" style="left:927px;top:382px;width:12px;height:13px"></div>
<div class="a" style="left:886px;top:401px;width:53px;height:14px;background:#5e5e5e"></div>
<div class="a" style="left:927px;top:401px;width:12px;height:14px;background:#555"></div>
<!-- OVERLAYS -->
<!-- vertical scroll thumb -->
<div class="a" style="left:800px;top:258px;width:10px;height:12px;background:#8e8e8e"></div>
<!-- volcano widget -->
<svg class="a" style="left:940px;top:0" width="60" height="55">
 <path d="M31 22 q-3 -5 -1 -9 q-3 -5 0 -9 q2 -4 8 -4 h22 v10 q-5 3 -12 1 q-4 1 -6 4 q2 4 -1 7z" fill="#8c8c8c"/>
 <path d="M38 0 v5" stroke="#5a8a7a" stroke-width="2"/>
 <text x="44" y="5" font-size="6" fill="#b8a8a8" font-weight="bold" opacity="0.6">BRO</text>
 <path d="M29 21 h10 L49 45 H17 Z" fill="#2cb044"/>
 <path d="M29 21 h10 L45 31 L41 33 L37 28 L33 31 L29 29 L23 33 Z" fill="#f4f4f4"/>
 <text x="25" y="41.5" font-size="9" fill="#d0f4d0" font-family="Liberation Sans">72</text>
 <text x="36" y="41" font-size="6" fill="#a0e0a0" font-family="Liberation Sans">%</text>
 <ellipse cx="35" cy="47" rx="25" ry="3.2" fill="#a08468"/>
 <circle cx="52" cy="42.5" r="5.5" fill="#3a78d8" stroke="#dde" stroke-width="1"/>
 <path d="M52 39.5 l0.8 2.2 2.2 0.8 -2.2 0.8 -0.8 2.2 -0.8 -2.2 -2.2 -0.8 2.2 -0.8z" fill="#fff"/>
 <circle cx="56" cy="38.5" r="2" fill="#e03030"/>
</svg>
<!-- scroll up arrow -->
<div class="a" style="left:801px;top:41px;width:0;height:0;border-left:4px solid transparent;border-right:4px solid transparent;border-bottom:6px solid #e8e8e8"></div>
<!-- gradient annotator icons -->
<svg class="a" style="left:824px;top:396px" width="16" height="16"><rect x="0.5" y="0.5" width="9" height="5" fill="#333" stroke="#ddd"/><rect x="2" y="2" width="5" height="2" fill="#ddd"/><path d="M11 2 l3 0 -1.5 2z" fill="#ddd"/><rect x="3" y="9" width="4" height="4" fill="#222" stroke="#ddd" stroke-width="0.8"/><circle cx="1.5" cy="11" r="1" fill="#ccc"/></svg>
<!-- baidu watermark -->
<svg class="a" style="left:812px;top:390px" width="188" height="110">
 <ellipse cx="36" cy="12.5" rx="6.5" ry="9" fill="#d0d0d0"/>
 <ellipse cx="52" cy="14" rx="6.5" ry="8.5" fill="#d0d0d0"/>
 <circle cx="62" cy="24" r="5" fill="#cfcfcf"/>
 <circle cx="65" cy="18" r="3.5" fill="#5a5a5a"/>
 <path d="M8 27 q10 -1 15 -5 q5 -6 12 0 q8 4 20 3 l8 2 z" fill="#eee"/>
 <rect x="8" y="26.5" width="152" height="1.8" fill="#f2f2f2"/>
 <path d="M6 28 H150 L170 37 H6Z" fill="#2c2c2c"/>
 <rect x="133" y="28" width="12" height="10" fill="#9a9a9a"/>
 <rect x="6" y="37" width="182" height="14" fill="#3a3a3a"/>
 <rect x="9" y="37" width="56" height="15" fill="#c2c2c2"/>
 <rect x="9" y="37" width="5" height="19" fill="#f4f4f4"/>
 <path d="M18 52 a14 14 0 0 1 28 0 h-6 a8 8 0 0 0 -16 0z" fill="#f2f2f2"/>
 <path d="M26 52 a6 6 0 0 1 12 0z" fill="#e0e0e0"/>
 <path d="M40 52 v-6 a6 6 0 0 1 12 -1 a6 6 0 0 1 12 1 v6 h-4 v-6 a2 2 0 0 0 -4 0 v6 h-4 v-6 a2 2 0 0 0 -4 0 v6z" fill="#f4f4f4"/>
 <text x="70" y="51" font-size="15" fill="#f4f4f4" font-weight="bold" transform="translate(70 51) scale(1.9 1) translate(-70 -51)">经验</text>
 <path d="M6 51 H188 V62 H6Z" fill="#2e2e2e"/>
 <rect x="133" y="51" width="12" height="10" fill="#9a9a9a"/>
 <rect x="170" y="41" width="9" height="8" fill="#555" stroke="#777" stroke-width="0.7"/>
</svg>
<div class="a" style="left:886px;top:465px;width:40px;height:12px;background:#8c8c8c"></div>
<div class="a" style="left:926px;top:465px;width:12px;height:12px;background:#555"></div>
<div class="a txt" style="left:857px;top:465px;font-size:10px;color:#ccc">不透明度：</div>
<div class="a txt" style="left:818px;top:452px;font-size:24px;color:#f4f4f4;transform:scaleX(0.89);transform-origin:0 0">an.baidu.com</div>
<div class="a txt" style="left:857px;top:484px;font-size:10px;color:#ccc">位置</div>
<!-- sogou bar -->
<div class="a" style="left:888px;top:483px;width:112px;height:17px;background:#fbfbfb"></div>
<svg class="a" style="left:870px;top:480px" width="130" height="20">
 <rect x="3" y="2" width="19" height="19" rx="4" fill="#2fb830" transform="rotate(-8 12 12)"/>
 <path d="M17 7 q-4 -3 -8 0 q-2 2 1 4 l4 1 q3 1 1 3 q-4 2 -8 -1" fill="none" stroke="#fff" stroke-width="2.8" stroke-linecap="round"/>
 <text x="27" y="15" font-size="11" fill="#3a4262">英</text>
 <path d="M53 7 q3 5 -1 9 q-3 2 -6 0 q5 -1 7 -9z" fill="#3a4262"/>
 <circle cx="66" cy="9" r="1.3" fill="#3a4262"/><path d="M70 11 q1 2 -1 4" stroke="#3a4262" stroke-width="1.5" fill="none"/>
 <rect x="78.5" y="7.5" width="13" height="9" rx="1" fill="none" stroke="#3a4262" stroke-width="1.3"/>
 <path d="M81 10h8M81 12h8M81 14h8" stroke="#3a4262" stroke-width="0.9" stroke-dasharray="1 1"/>
 <circle cx="102" cy="9" r="3" fill="#c0c8c8"/><path d="M97 17 q5 -6 10 0z" fill="#c0c8c8"/>
 <path d="M115 17 l6 -6 q-1 -4 3 -5 l-1 2 2 2 2 -1 q-1 4 -5 3 l-6 6z" fill="#3a4262"/>
</svg>
</body></html>
